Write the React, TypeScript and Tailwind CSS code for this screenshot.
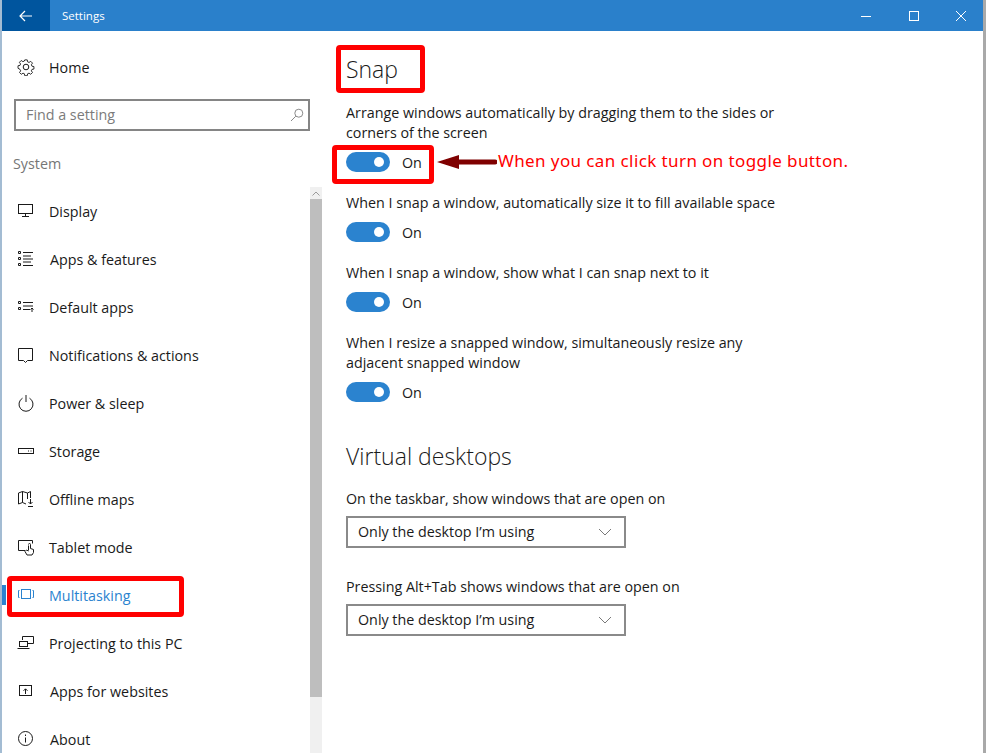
import type { ReactNode } from 'react';

const FONT = "font-['Open_Sans','Noto_Sans',sans-serif]";

/** Thin outline glyph wrapper, all nav icons share a 18px box. */
function Glyph({ children, className = '' }: { children: ReactNode; className?: string }) {
  return (
    <svg
      viewBox="0 0 18 18"
      width="18"
      height="18"
      fill="none"
      stroke="currentColor"
      strokeWidth="1"
      className={className}
    >
      {children}
    </svg>
  );
}

const NAV_ITEMS: { label: string; active?: boolean; nudge?: boolean; icon: ReactNode }[] = [
  {
    label: 'Display',
    icon: (
      <>
        <rect x="1.5" y="2.5" width="14" height="9" />
        <path d="M8.5 11.500v2.500M5 14.500h7" />
      </>
    ),
  },
  {
    label: 'Apps & features',
    nudge: true,
    icon: (
      <>
        <path d="M1.500 1.500h2v2h-2zM1.500 7.500h2v2h-2zM1.500 13.500h2v2h-2z" />
        <path d="M6 2.500h10M6 6h8M6 9h10M6 12h8M6 15.500h10" />
      </>
    ),
  },
  {
    label: 'Default apps',
    icon: (
      <>
        <path d="M1.500 3.500h2v2h-2zM1.500 9.500h2v2h-2z" />
        <path d="M6 4.500h10M6 8h10M6 11.500h7M15 14V10M13.500 11.500 15 10l1.500 1.500" />
      </>
    ),
  },
  {
    label: 'Notifications & actions',
    icon: <path d="M1.500 2.500h14v12h-5l-2 2-2-2h-5z" />,
  },
  {
    label: 'Power & sleep',
    icon: (
      <>
        <path d="M5.500 4.200a7 7 0 1 0 7 0" />
        <path d="M9 1v7" />
      </>
    ),
  },
  {
    label: 'Storage',
    icon: (
      <>
        <rect x="1.5" y="6.5" width="15" height="5" />
        <path d="M11 9h1M13.500 9h1" />
      </>
    ),
  },
  {
    label: 'Offline maps',
    icon: (
      <>
        <path d="M1.500 14V3l4-1.500 5 1.500 3-1.500V8M5.500 1.500V12.500L1.500 14M10.500 3v6M5.500 12.500 9 14" />
        <path d="M13.500 9v5M11.500 12l2 2 2-2M11 16.500h5" />
      </>
    ),
  },
  {
    label: 'Tablet mode',
    icon: (
      <>
        <path d="M8 12.500H1.500v-10h14v3" />
        <path d="M11.500 7.500v5M11.500 6.500a1 1 0 0 1 2 0v4l3 1v3l-1.500 2.500H10L8 13.500l1.500-1.500 2 1" />
      </>
    ),
  },
  {
    label: 'Multitasking',
    active: true,
    icon: (
      <>
        <rect x="4.5" y="3.5" width="9" height="9" />
        <path d="M2.500 4.500h-1v7h1M15.500 4.500h1v7h-1" />
      </>
    ),
  },
  {
    label: 'Projecting to this PC',
    icon: (
      <>
        <path d="M5.500 6V2.500h11v7h-6" />
        <rect x="2.5" y="7.5" width="8" height="5" />
        <path d="M.5 14.500h12" />
      </>
    ),
  },
  {
    label: 'Apps for websites',
    nudge: true,
    icon: (
      <>
        <rect x="2.5" y="3.5" width="12" height="10" />
        <path d="M8.500 12V7M6.500 8.800l2-2 2 2" />
      </>
    ),
  },
  {
    label: 'About',
    nudge: true,
    icon: (
      <>
        <circle cx="8.5" cy="8.5" r="7" />
        <path d="M8.500 7.500v5M8.500 4.500v1.500" />
      </>
    ),
  },
];

function Toggle() {
  return (
    <div className="flex h-5 items-center">
      <div className="flex h-5 w-11 items-center justify-end rounded-full bg-[#2b83cf] pr-1.5">
        <div className="h-2.5 w-2.5 rounded-full bg-white" />
      </div>
      <span className="ml-3 pt-[2px] text-[14.3px] text-[#1a1a1a]">On</span>
    </div>
  );
}

function Dropdown() {
  return (
    <div className="flex h-8 w-[280px] items-center justify-between border-2 border-[#8a8a8a] px-2.5 text-[14.3px] text-[#1a1a1a]">
      <span>Only the desktop I’m using</span>
      <svg width="14" height="8" viewBox="0 0 14 8" fill="none" stroke="#7a7a7a" className="mr-0.5">
        <path d="M1 1l6 6 6-6" />
      </svg>
    </div>
  );
}

function Sidebar() {
  return (
    <aside className="relative flex w-[320px] shrink-0 flex-col">
      <div className="mt-3 flex h-12 shrink-0 items-center pl-[15px] text-[14.3px] text-[#1a1a1a]">
        <svg viewBox="0 0 18 18" width="18" height="18" fill="none" stroke="currentColor">
          <circle cx="9" cy="9" r="2.8" />
          <path d="M7.600 1h2.800l.4 2.200 1.600.7 1.900-1.300 2 2-1.300 1.900.7 1.600 2.200.4v2.800l-2.200.4-.7 1.600 1.300 1.900-2 2-1.900-1.300-1.600.7-.4 2.200H7.600l-.4-2.200-1.600-.7-1.900 1.300-2-2 1.300-1.900-.7-1.600L0 10.400V7.600l2.200-.4.7-1.600L1.600 3.700l2-2 1.900 1.300 1.600-.7z" transform="translate(1 1) scale(.89)" />
        </svg>
        <span className="ml-[14px] pt-[2px]">Home</span>
      </div>
      <div className="ml-3 mt-[8px] flex h-8 w-[296px] shrink-0 items-center justify-between border-2 border-[#858585] pl-2.5 pr-1 text-[14.3px] text-[#7b7b7b]">
        <span>Find a setting</span>
        <svg width="14" height="14" viewBox="0 0 14 14" fill="none" stroke="#8a8a8a">
          <circle cx="8.8" cy="5.2" r="4" />
          <path d="M5.800 8.200 1 13" />
        </svg>
      </div>
      <div className="ml-[11px] mt-[23px] h-5 shrink-0 text-[14.3px] leading-5 text-[#767676]">System</div>
      <nav className="mt-[13px] flex flex-col">
        {NAV_ITEMS.map((item) => (
          <div
            key={item.label}
            className={`relative flex h-12 shrink-0 items-center pl-[15px] text-[14.3px] ${
              item.active ? 'text-[#2b83cf]' : 'text-[#1a1a1a]'
            }`}
          >
            {item.active && <div className="absolute left-0 top-[14px] h-5 w-[4px] bg-[#2b83cf]" />}
            <Glyph>{item.icon}</Glyph>
            <span className={`pt-[2px] ${item.nudge ? 'ml-[15px]' : 'ml-[14px]'}`}>{item.label}</span>
          </div>
        ))}
      </nav>
      <div className="absolute bottom-0 right-0 top-[156px] flex w-3 flex-col bg-[#f0f0f0]">
        <div className="flex h-3 shrink-0 items-center justify-center">
          <svg width="8" height="5" viewBox="0 0 8 5" fill="none" stroke="#9a9a9a">
            <path d="M.5 4.500 4 1l3.500 3.500" />
          </svg>
        </div>
        <div className="h-[498px] bg-[#bebebe]" />
      </div>
    </aside>
  );
}

export default function App() {
  return (
    <div className={`relative flex h-[753px] w-[986px] overflow-hidden bg-white ${FONT}`}>
      <div className="w-0.5 shrink-0 bg-[#a3bcd3]" />
      <div className="flex min-w-0 flex-1 flex-col">
        <header className="flex h-[31px] shrink-0 items-center bg-[#2a80cb] text-white">
          <div className="flex h-full w-12 items-center justify-center bg-[#00559e]">
            <svg width="14" height="12" viewBox="0 0 14 12" fill="none" stroke="white" strokeWidth="1.2">
              <path d="M13 6H1M6 1 1 6l5 5" />
            </svg>
          </div>
          <span className="ml-3 text-[11.5px]">Settings</span>
          <div className="ml-auto flex items-center pr-[16px]">
            <svg width="12" height="12" viewBox="0 0 12 12" stroke="white" className="mr-[36px]">
              <path d="M1 6.500h10" />
            </svg>
            <svg width="12" height="12" viewBox="0 0 12 12" fill="none" stroke="white" className="mr-[35px]">
              <rect x="1.5" y="1.5" width="9" height="9" />
            </svg>
            <svg width="12" height="12" viewBox="0 0 12 12" stroke="white">
              <path d="M1 1l10 10M11 1 1 11" />
            </svg>
          </div>
        </header>
        <div className="flex min-h-0 flex-1">
          <Sidebar />
          <main className="min-w-0 flex-1 pl-6 text-[#1a1a1a]">
            <h1 className="mt-[22px] text-[23px] font-light leading-8">Snap</h1>
            <p className="mt-[18px] w-[440px] text-[14.3px] leading-5">
              Arrange windows automatically by dragging them to the sides or corners of the screen
            </p>
            <div className="mt-[9px]"><Toggle /></div>
            <p className="mt-[21px] text-[14.3px] leading-5">When I snap a window, automatically size it to fill available space</p>
            <div className="mt-[9px]"><Toggle /></div>
            <p className="mt-[21px] text-[14.3px] leading-5">When I snap a window, show what I can snap next to it</p>
            <div className="mt-[9px]"><Toggle /></div>
            <p className="mt-[21px] w-[440px] text-[14.3px] leading-5">
              When I resize a snapped window, simultaneously resize any adjacent snapped window
            </p>
            <div className="mt-[9px]"><Toggle /></div>
            <h2 className="mt-[38px] text-[23px] font-light leading-8">Virtual desktops</h2>
            <p className="mt-[17px] text-[14.3px] leading-5">On the taskbar, show windows that are open on</p>
            <div className="mt-[7px]"><Dropdown /></div>
            <p className="mt-[29px] text-[14.3px] leading-5">Pressing Alt+Tab shows windows that are open on</p>
            <div className="mt-[7px]"><Dropdown /></div>
          </main>
        </div>
      </div>
      <div className="w-[3px] shrink-0 bg-[#a9a9a9]" />

      {/* annotations drawn on top of the screenshot */}
      <div className="absolute left-[336px] top-[45px] h-[48px] w-[89px] rounded-sm border-[5px] border-[#ff0000]" />
      <div className="absolute left-[332px] top-[145px] h-[39px] w-[102px] rounded-sm border-[5px] border-[#ff0000]" />
      <div className="absolute left-[7px] top-[576px] h-[41px] w-[177px] rounded-sm border-[5px] border-[#ff0000]" />
      <svg width="60" height="16" viewBox="0 0 60 16" className="absolute left-[437px] top-[154px]">
        <path d="M0 8 22 1v4.500h36a2.500 2.500 0 0 1 0 5H22V15z" fill="#7f0000" />
      </svg>
      <div className="absolute left-[498px] top-[149px] font-['Noto_Sans',sans-serif] text-[17px] leading-6 tracking-[0.4px] text-[#ff0000]">
        When you can click turn on toggle button.
      </div>
    </div>
  );
}
